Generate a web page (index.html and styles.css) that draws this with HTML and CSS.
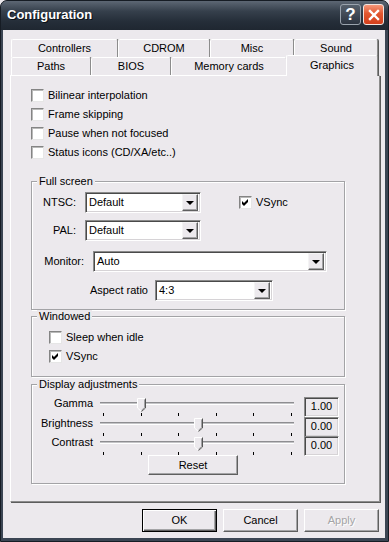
FILE: index.html
```html
<!DOCTYPE html>
<html lang="en">

<head>
    <meta charset="UTF-8">
    <title>Configuration</title>
    <link rel="stylesheet" href="styles.css">
</head>

<body>
    <div class="window">
        <div class="titlebar">
            <span class="title">Configuration</span>
            <div class="caption">
                <span class="cap-btn help">?</span>
                <span class="cap-btn close">
                    <svg width="12" height="12" viewBox="0 0 12 12">
                        <path d="M2 2 L10 10 M10 2 L2 10" stroke="#fff" stroke-width="2.4" stroke-linecap="square" />
                    </svg>
                </span>
            </div>
        </div>

        <div class="client">
            <div class="tabs">
                <div class="tab-row">
                    <div class="tab w107">Controllers</div>
                    <div class="tab w92">CDROM</div>
                    <div class="tab w84">Misc</div>
                    <div class="tab w84">Sound</div>
                </div>
                <div class="tab-row">
                    <div class="tab w80">Paths</div>
                    <div class="tab w80">BIOS</div>
                    <div class="tab w116">Memory cards</div>
                    <div class="tab w92 active">Graphics</div>
                </div>
            </div>

            <div class="panel">
                <div class="check-list">
                    <label class="check"><span class="box"></span>Bilinear interpolation</label>
                    <label class="check"><span class="box"></span>Frame skipping</label>
                    <label class="check"><span class="box"></span>Pause when not focused</label>
                    <label class="check"><span class="box"></span>Status icons (CD/XA/etc..)</label>
                </div>

                <div class="group fullscreen">
                    <span class="group-title">Full screen</span>
                    <div class="row row-ntsc">
                        <span class="lbl lbl-short">NTSC:</span>
                        <div class="combo combo-small"><span class="combo-text">Default</span><span class="drop"></span></div>
                        <label class="check vsync"><span class="box checked"></span>VSync</label>
                    </div>
                    <div class="row row-pal">
                        <span class="lbl lbl-short">PAL:</span>
                        <div class="combo combo-small"><span class="combo-text">Default</span><span class="drop"></span></div>
                    </div>
                    <div class="row row-monitor">
                        <span class="lbl lbl-monitor">Monitor:</span>
                        <div class="combo combo-wide"><span class="combo-text">Auto</span><span class="drop"></span></div>
                    </div>
                    <div class="row row-aspect">
                        <span class="lbl lbl-aspect">Aspect ratio</span>
                        <div class="combo combo-aspect"><span class="combo-text">4:3</span><span class="drop"></span></div>
                    </div>
                </div>

                <div class="group windowed">
                    <span class="group-title">Windowed</span>
                    <div class="check-list inner">
                        <label class="check"><span class="box"></span>Sleep when idle</label>
                        <label class="check"><span class="box checked"></span>VSync</label>
                    </div>
                </div>

                <div class="group adjust">
                    <span class="group-title">Display adjustments</span>
                    <div class="sliders">
                        <span class="lbl">Gamma</span>
                        <div class="slider">
                            <div class="track"></div>
                            <span class="thumb thumb-gamma"></span>
                            <div class="ticks"><i></i><i></i><i></i><i></i><i></i><i></i></div>
                        </div>
                        <span class="edit">1.00</span>

                        <span class="lbl">Brightness</span>
                        <div class="slider">
                            <div class="track"></div>
                            <span class="thumb thumb-mid"></span>
                            <div class="ticks"><i></i><i></i><i></i><i></i><i></i><i></i></div>
                        </div>
                        <span class="edit">0.00</span>

                        <span class="lbl">Contrast</span>
                        <div class="slider">
                            <div class="track"></div>
                            <span class="thumb thumb-mid"></span>
                            <div class="ticks"><i></i><i></i><i></i><i></i><i></i><i></i></div>
                        </div>
                        <span class="edit">0.00</span>
                    </div>
                    <button class="btn reset">Reset</button>
                </div>
            </div>

            <div class="buttons">
                <button class="btn default">OK</button>
                <button class="btn">Cancel</button>
                <button class="btn disabled">Apply</button>
            </div>
        </div>
    </div>
</body>

</html>
```

FILE: styles.css
```css
* {
    box-sizing: border-box;
}

body {
    margin: 0;
    background-color: #ece9ed;
    font: 11px/13px "Liberation Sans", Arial, sans-serif;
    color: #000;
}

button {
    font: inherit;
    color: inherit;
    padding: 0;
    margin: 0;
}

.window {
    width: 389px;
    height: 542px;
    display: flex;
    flex-direction: column;
    background-color: #3b4553;
    border: 1px solid #161c24;
    border-radius: 7px 7px 0 0;
}

/* title bar */
.titlebar {
    height: 29px;
    flex: none;
    display: flex;
    align-items: center;
    justify-content: space-between;
    padding: 0 4px 2px 6px;
    background: linear-gradient(#5d6774, #36404c 35%, #252e39 70%, #1f2731);
    border-radius: 6px 6px 0 0;
}

.title {
    color: #fff;
    font: bold 13px/16px "Liberation Sans", Arial, sans-serif;
    text-shadow: 1px 1px #0b1016;
}

.caption {
    display: flex;
    gap: 2px;
}

.cap-btn {
    width: 21px;
    height: 21px;
    border-radius: 3px;
    display: flex;
    align-items: center;
    justify-content: center;
}

.help {
    background: linear-gradient(#56606c, #2c3440);
    border: 1px solid #9aa3ad;
    color: #fff;
    font: bold 17px/17px "Liberation Sans", Arial, sans-serif;
}

.close {
    background: linear-gradient(#f6977a, #e2572f 45%, #d23f1c);
    border: 1px solid #f3e4df;
}

/* client area */
.client {
    flex: 1;
    margin: 0 3px 3px 2px;
    padding: 9px 5px 0 7px;
    background-color: #ece9ed;
    display: flex;
    flex-direction: column;
}

.tabs {
    height: 36px;
    padding-left: 1px;
}

.tab-row {
    height: 18px;
    display: flex;
    align-items: flex-end;
}

.tab {
    height: 18px;
    padding-top: 2px;
    text-align: center;
    background-color: #ece9ed;
    border-top: 1px solid #fff;
    border-left: 1px solid #fff;
    border-right: 1px solid #8c8c8c;
    box-shadow: 1px 0 0 #5c5c5c;
    border-radius: 2px 2px 0 0;
}

.tab.active {
    height: 21px;
    margin: 0 -1px -1px -1px;
    padding-top: 3px;
    position: relative;
    z-index: 2;
}

.w80 { width: 80px; }
.w84 { width: 84px; }
.w92 { width: 92px; }
.w107 { width: 107px; }
.w116 { width: 116px; }

.panel {
    height: 427px;
    padding: 13px 0 0 20px;
    border-top: 1px solid #fff;
    border-left: 1px solid #fff;
    border-right: 1px solid #8c8c8c;
    border-bottom: 1px solid #8c8c8c;
    box-shadow: 1px 1px 0 #5c5c5c;
}

/* checkboxes */
.check-list {
    display: flex;
    flex-direction: column;
    gap: 6px;
}

.check {
    height: 13px;
    display: flex;
    align-items: center;
    gap: 4px;
    white-space: nowrap;
}

.box {
    width: 13px;
    height: 13px;
    flex: none;
    background-color: #fff;
    border: 1px solid;
    border-color: #848484 #e6e6e6 #e6e6e6 #848484;
    box-shadow: inset 1px 1px #b9b9b9;
}

.box.checked {
    background: #fff url("data:image/svg+xml,%3Csvg xmlns='http://www.w3.org/2000/svg' width='11' height='11'%3E%3Cpath d='M2 4 L4 6 L8 2 L8 5 L4 9 L2 7 Z' fill='%23000'/%3E%3C/svg%3E") no-repeat 0 0;
}

/* group boxes */
.group {
    width: 314px;
    border: 1px solid #a3a3a6;
    box-shadow: inset 1px 1px #fff, 1px 1px #fff;
    display: flex;
    flex-direction: column;
}

.group-title {
    align-self: flex-start;
    margin: -7px 0 0 5px;
    padding: 0 2px;
    background-color: #ece9ed;
}

.fullscreen {
    height: 129px;
    margin-top: 22px;
}

.row {
    display: flex;
    align-items: center;
}

.row-ntsc { margin-top: 4px; }
.row-pal { margin-top: 7px; }
.row-monitor { margin-top: 10px; }
.row-aspect { margin-top: 8px; }

.lbl {
    text-align: right;
    flex: none;
}

.lbl-short { width: 44px; margin-right: 9px; }
.lbl-monitor { width: 52px; margin-right: 9px; }
.lbl-aspect { width: 116px; margin-right: 7px; }

.combo {
    height: 21px;
    display: flex;
    align-items: center;
    background-color: #fff;
    border: 1px solid;
    border-color: #8a8a8a #fff #fff #8a8a8a;
    box-shadow: inset 1px 1px #4a4a4a, inset -1px -1px #d6d3d6;
    padding: 2px 2px 2px 3px;
}

.combo-small { width: 116px; }
.combo-wide { width: 234px; }
.combo-aspect { width: 118px; }

.combo-text {
    flex: 1;
}

.drop {
    width: 16px;
    height: 17px;
    flex: none;
    background-color: #ece9ed;
    border: 1px solid;
    border-color: #f4f4f4 #5f5f5f #5f5f5f #f4f4f4;
    box-shadow: inset -1px -1px #a4a4a6;
    display: flex;
    align-items: center;
    justify-content: center;
}

.drop::after {
    content: "";
    border-left: 4px solid transparent;
    border-right: 4px solid transparent;
    border-top: 4px solid #000;
    margin-top: 1px;
}

.vsync {
    margin-left: 38px;
}

.windowed {
    height: 61px;
    margin-top: 6px;
}

.check-list.inner {
    margin: 8px 0 0 17px;
}

.adjust {
    height: 100px;
    margin-top: 7px;
}

.sliders {
    margin-top: 6px;
    display: grid;
    grid-template-columns: 61px 194px 34px;
    grid-template-rows: 20px 19px 19px;
    column-gap: 7px;
}

.sliders .edit {
    margin-left: 3px;
}

.sliders .lbl {
    padding-top: 0;
}

.slider {
    position: relative;
    height: 19px;
}

.track {
    margin-top: 5px;
    height: 3px;
    border-top: 1px solid #8e8e91;
    border-bottom: 1px solid #fff;
    background-color: #c4c4c7;
}

.ticks {
    margin-top: 8px;
    padding: 0 2px 0 3px;
    display: flex;
    justify-content: space-between;
}

.ticks i {
    width: 1px;
    height: 3px;
    background-color: #000;
}

/* thumb sits over the track */
.thumb {
    position: absolute;
    top: 1px;
    width: 9px;
    height: 14px;
    background: url("data:image/svg+xml,%3Csvg xmlns='http://www.w3.org/2000/svg' width='9' height='14'%3E%3Cpath d='M0.5 0.5 H8.5 V10 L4.5 13.5 L0.5 10 Z' fill='%23ece9ed' stroke='%23fff'/%3E%3Cpath d='M8.5 0.5 V10 L4.5 13.5' fill='none' stroke='%23555'/%3E%3Cpath d='M7.5 1.5 V9.5 L4.5 12.3' fill='none' stroke='%23a0a0a3'/%3E%3C/svg%3E") no-repeat;
}

.thumb-gamma { left: 37px; }
.thumb-mid { left: 94px; }

.edit {
    height: 20px;
    width: 35px;
    text-align: center;
    line-height: 17px;
    border: 1px solid;
    border-color: #8a8a8a #fff #fff #8a8a8a;
    box-shadow: inset 1px 1px #4a4a4a, inset -1px -1px #d6d3d6;
    background-color: #ece9ed;
}

/* push buttons */
.btn {
    width: 75px;
    height: 23px;
    background-color: #ece9ed;
    border: 1px solid;
    border-color: #fff #5f5f5f #5f5f5f #fff;
    box-shadow: inset -1px -1px #a4a4a6;
}

.reset {
    width: 90px;
    height: 20px;
    margin-left: 116px;
}

.btn.default {
    border: 1px solid #000;
    box-shadow: inset 1px 1px #fff, inset -1px -1px #5f5f5f, inset -2px -2px #a4a4a6;
}

.btn.disabled {
    color: #a4a4a6;
    text-shadow: 1px 1px #fff;
}

.buttons {
    margin-top: 7px;
    display: flex;
    justify-content: flex-end;
    gap: 6px;
    padding-right: 1px;
}
```
